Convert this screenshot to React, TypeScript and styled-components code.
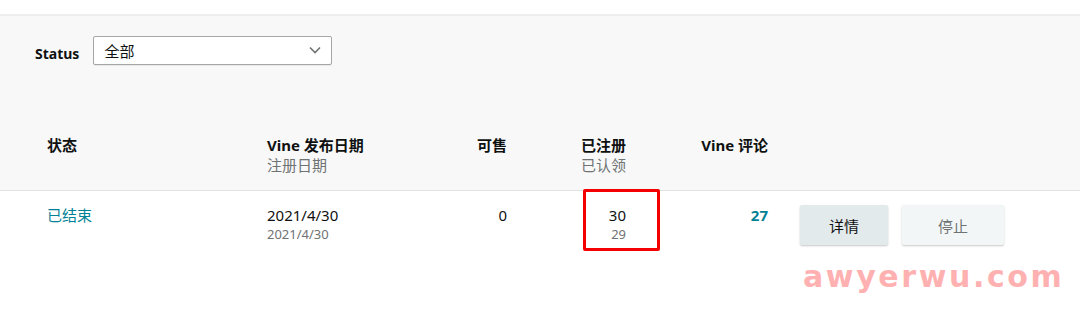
import React from "react";
import styled, { createGlobalStyle } from "styled-components";

const GlobalStyle = createGlobalStyle`
  body {
    margin: 0;
    background: #ffffff;
    font-family: "Noto Sans", "Noto Sans CJK SC", sans-serif;
    color: #0f1111;
  }
`;

const Page = styled.div`
  width: 1080px;
  height: 313px;
  overflow: hidden;
  position: relative;
  background: #ffffff;
`;

const TopStrip = styled.div`
  height: 14px;
  background: #ffffff;
  border-bottom: 2px solid #eeeeee;
`;

const GrayArea = styled.section`
  background: #f8f8f8;
  border-bottom: 1px solid #dfe3e3;
`;

const FilterRow = styled.div`
  display: flex;
  align-items: center;
  gap: 14px;
  padding: 19px 0 0 35px;
  height: 30px;
`;

const FilterLabel = styled.label`
  font-size: 14px;
  font-weight: 700;
  color: #0f1111;
  padding-top: 6px;
`;

const Select = styled.div`
  width: 239px;
  height: 29px;
  box-sizing: border-box;
  display: flex;
  align-items: center;
  justify-content: space-between;
  padding: 0 9px 0 10px;
  background: #ffffff;
  border: 1px solid #a6a6a6;
  border-radius: 2px;
  box-shadow: 0 1px 0 rgba(0, 0, 0, 0.06);
  font-size: 15px;
  color: #0f1111;
`;

const Grid = styled.div<{ $body?: boolean }>`
  display: grid;
  grid-template-columns: 220px 153px 87px 119px 142px 1fr;
  padding: ${(p) => (p.$body ? "14px 0 0 47px" : "70px 0 15px 47px")};
  position: relative;
`;

const Cell = styled.div<{ $right?: boolean; $bold?: boolean; $color?: string }>`
  text-align: ${(p) => (p.$right ? "right" : "left")};
  font-size: 15px;
  line-height: 20px;
  font-weight: ${(p) => (p.$bold ? 700 : 400)};
  color: ${(p) => p.$color || "#0f1111"};
  position: relative;
`;

const Sub = styled.div`
  font-size: 15px;
  line-height: 20px;
  font-weight: 400;
  color: #6f7373;
`;

const SmallSub = styled.div`
  font-size: 13px;
  line-height: 18px;
  color: #6f7373;
`;

const Actions = styled.div`
  display: flex;
  gap: 14px;
  padding-left: 32px;
`;

const Button = styled.button<{ $muted?: boolean }>`
  height: 40px;
  width: ${(p) => (p.$muted ? "102px" : "88px")};
  border: none;
  border-radius: 2px;
  background: ${(p) => (p.$muted ? "#f3f6f7" : "#e3eaec")};
  color: ${(p) => (p.$muted ? "#6f7373" : "#0f1111")};
  box-shadow: 0 1px 2px rgba(0, 0, 0, 0.22);
  font-family: inherit;
  font-size: 15px;
`;

const Highlight = styled.div`
  position: absolute;
  left: 76px;
  top: -16px;
  width: 77px;
  height: 62px;
  box-sizing: border-box;
  border: 3px solid #f40000;
  border-radius: 2px;
`;

const Watermark = styled.div`
  position: absolute;
  left: 803px;
  top: 259px;
  font-family: "DejaVu Sans", sans-serif;
  font-weight: 700;
  font-size: 30px;
  letter-spacing: 2.6px;
  color: #ffb1b1;
`;

const Chevron = () => (
  <svg width="14" height="14" viewBox="0 0 14 14" fill="none">
    <path d="M2 4.5 L7 9.5 L12 4.5" stroke="#6f7373" strokeWidth="1.6" />
  </svg>
);

export default function App() {
  return (
    <Page>
      <GlobalStyle />
      <TopStrip />
      <GrayArea>
        <FilterRow>
          <FilterLabel>Status</FilterLabel>
          <Select>
            <span>全部</span>
            <Chevron />
          </Select>
        </FilterRow>
        <Grid>
          <Cell $bold>状态</Cell>
          <Cell $bold>
            Vine 发布日期
            <Sub>注册日期</Sub>
          </Cell>
          <Cell $bold $right>可售</Cell>
          <Cell $bold $right>
            已注册
            <Sub>已认领</Sub>
          </Cell>
          <Cell $bold $right>Vine 评论</Cell>
          <div />
        </Grid>
      </GrayArea>
      <Grid $body>
        <Cell $color="#008296">已结束</Cell>
        <Cell>
          2021/4/30
          <SmallSub>2021/4/30</SmallSub>
        </Cell>
        <Cell $right>0</Cell>
        <Cell $right>
          30
          <SmallSub>29</SmallSub>
          <Highlight />
        </Cell>
        <Cell $right $bold $color="#008296">27</Cell>
        <Actions>
          <Button>详情</Button>
          <Button $muted>停止</Button>
        </Actions>
      </Grid>
      <Watermark>awyerwu.com</Watermark>
    </Page>
  );
}
